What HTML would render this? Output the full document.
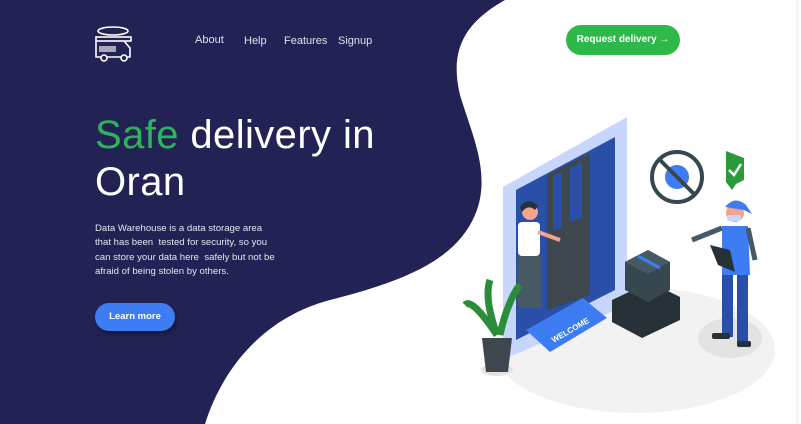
<!DOCTYPE html>
<html><head><meta charset="utf-8"><style>
*{margin:0;padding:0;box-sizing:border-box}
body{width:801px;height:424px;overflow:hidden;background:#fff;font-family:"Liberation Sans",sans-serif;position:relative}
.abs{position:absolute}
nav a{position:absolute;top:35px;color:#dfe0ee;font-size:11px;text-decoration:none}
h1{position:absolute;left:95px;top:112px;font-size:40px;font-weight:normal;color:#fff;line-height:47px;letter-spacing:0.4px}
h1 span{color:#2fb35a}
p{position:absolute;left:95px;top:222px;width:220px;font-size:9.6px;line-height:14.4px;color:#e4e5f0;white-space:nowrap}
.btn1{left:95px;top:303px;width:80px;height:28px;border-radius:14px;background:#3e7cf4;color:#fff;font-size:9.5px;font-weight:bold;text-align:center;line-height:28px;box-shadow:2px 3px 5px rgba(0,0,0,.35)}
.btn2{left:566px;top:25px;width:114px;height:30px;border-radius:15px;background:#2fb84a;color:#fff;font-size:10px;font-weight:bold;text-align:center;line-height:30px}
</style></head><body>
<svg class="abs" style="left:0;top:0" width="801" height="424">
<path d="M0,0 L505,0 C470,20 448,45 460,95 C472,135 492,175 475,215 C455,262 400,282 330,300 C262,318 222,370 205,424 L0,424 Z" fill="#222354"/>
<line x1="797" y1="0" x2="797" y2="424" stroke="#e8e8e8" stroke-width="1"/>
<ellipse cx="635" cy="350" rx="140" ry="63" fill="#f2f2f2"/>
<ellipse cx="730" cy="338" rx="32" ry="20" fill="#e3e3e3"/>
<ellipse cx="497" cy="370" rx="16" ry="6" fill="#e3e3e3"/>
<polygon points="503,187 627,117 627,305 503,360" fill="#c8d6fb"/>
<polygon points="516,190 615,137 615,290 516,340" fill="#2a4fa8"/>
<polygon points="547,175 590,153 590,295 547,310" fill="#3f474e"/>
<polygon points="553,176 562,172 562,228 553,230" fill="#2a4fa8"/>
<polygon points="570,168 582,162 582,218 570,222" fill="#2a4fa8"/>
<polygon points="526,330 583,298 607,318 550,352" fill="#3e7cf4"/>
<text x="548" y="338" font-size="8" fill="#fff" font-weight="bold" transform="rotate(-30 560 330)">WELCOME</text>
<circle cx="530" cy="212" r="8" fill="#f2a48e"/>
<path d="M520,207 Q528,196 538,206 L535,210 Q528,204 522,212 Z" fill="#263238"/>
<rect x="518" y="222" width="22" height="34" rx="4" fill="#fff"/>
<rect x="518" y="256" width="24" height="52" rx="3" fill="#455a64"/>
<path d="M538,232 L560,240" stroke="#f2a48e" stroke-width="4"/>
<path d="M497,335 C480,310 470,300 465,305 M500,335 C505,310 515,290 520,285 M497,335 C490,315 485,295 490,280" stroke="#2a8d3a" stroke-width="7" fill="none"/>
<path d="M482,338 L512,338 L508,372 L486,372 Z" fill="#3f474e"/>
<polygon points="612,300 650,282 680,297 680,320 642,338 612,322" fill="#263238"/>
<polygon points="625,262 648,250 670,262 670,290 648,302 625,290" fill="#37474f"/>
<polygon points="625,262 648,250 670,262 648,274" fill="#455a64"/>
<line x1="638" y1="256" x2="660" y2="268" stroke="#3e7cf4" stroke-width="3"/>
<circle cx="677" cy="177" r="25" fill="#fff" stroke="#37474f" stroke-width="4"/>
<circle cx="677" cy="177" r="12" fill="#3e7cf4"/>
<line x1="660" y1="160" x2="694" y2="194" stroke="#37474f" stroke-width="4"/>
<path d="M726,151 L744,158 L744,180 L736,184 L732,190 L726,182 Z" fill="#2a9a3a"/>
<path d="M729,170 L734,175 L741,164" stroke="#fff" stroke-width="2.5" fill="none"/>
<circle cx="735" cy="213" r="9" fill="#f2a48e"/>
<path d="M725,207 Q735,195 746,205 L752,214 L744,210 Z" fill="#3e7cf4"/>
<rect x="727" y="215" width="14" height="6" rx="2" fill="#c8d6fb"/>
<path d="M722,226 L748,226 L750,275 L722,275 Z" fill="#3e7cf4"/>
<path d="M722,228 L692,240" stroke="#455a64" stroke-width="5"/>
<path d="M748,228 L755,260" stroke="#455a64" stroke-width="5"/>
<polygon points="710,245 730,250 735,272 718,265" fill="#263238"/>
<rect x="722" y="275" width="11" height="62" fill="#2a4fa8"/>
<rect x="737" y="275" width="11" height="68" fill="#2a4fa8"/>
<rect x="712" y="333" width="18" height="6" rx="2" fill="#263238"/>
<rect x="737" y="341" width="14" height="6" rx="2" fill="#263238"/>
<g stroke="#fff" stroke-width="1.6" fill="none">
<ellipse cx="113" cy="31" rx="15" ry="4"/>
<rect x="96" y="37" width="35" height="4"/>
<path d="M96,41 L96,57 L130,57 L130,48 L124,41"/>
<circle cx="104" cy="58" r="3" fill="#222354"/><circle cx="124" cy="58" r="3" fill="#222354"/>
</g>
<polygon points="99,46 116,46 116,52 99,52" fill="#fff" opacity=".6"/>
</svg>
<nav><a style="left:195px;top:34px">About</a><a style="left:244px">Help</a><a style="left:284px">Features</a><a style="left:338px">Signup</a></nav>
<h1><span>Safe</span> delivery in<br>Oran</h1>
<p>Data Warehouse is a data storage area<br>that has been&nbsp; tested for security, so you<br>can store your data here&nbsp; safely but not be<br>afraid of being stolen by others.</p>
<div class="abs btn1">Learn more</div>
<div class="abs btn2">Request delivery →</div>
</body></html>
